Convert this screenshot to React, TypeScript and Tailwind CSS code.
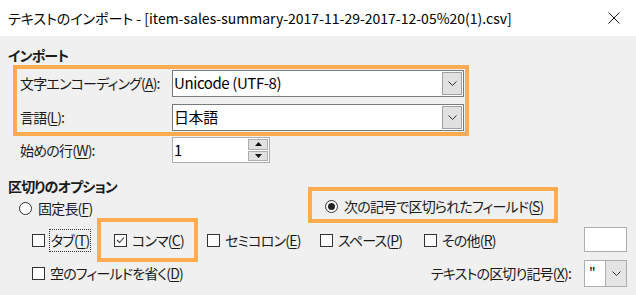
import type { ReactNode } from "react";

const FONT = "font-['Noto_Sans_CJK_JP',sans-serif] [font-feature-settings:'palt']";

function Key({ k }: { k: string }) {
  return <span className="underline underline-offset-2 decoration-1">{k}</span>;
}

function Chevron() {
  return (
    <svg width="9" height="5" viewBox="0 0 9 5" fill="none">
      <path d="M0.5 0.5 L4.5 4.5 L8.5 0.5" stroke="#333" strokeWidth="1" />
    </svg>
  );
}

function Combo({ value }: { value: string }) {
  return (
    <div className="flex h-[27px] w-[292px] shrink-0 border border-[#7a7a7a] bg-white">
      <div className="flex flex-1 items-center pl-[1px] text-[15px] tracking-[-0.4px] text-black">{value}</div>
      <div className="m-[1px] flex w-[20px] items-center justify-center border border-[#a0a0a0] bg-[#e1e1e1]">
        <Chevron />
      </div>
    </div>
  );
}

function Check({ checked, label }: { checked?: boolean; label: ReactNode }) {
  return (
    <div className="flex items-center gap-[5px]">
      <div className="flex h-[13px] w-[13px] shrink-0 items-center justify-center border border-[#333] bg-white">
        {checked && (
          <svg width="9" height="8" viewBox="0 0 9 8" fill="none">
            <path d="M1 4 L3.5 6.5 L8 1.5" stroke="#333" strokeWidth="1.1" />
          </svg>
        )}
      </div>
      <span>{label}</span>
    </div>
  );
}

function Radio({ checked, label }: { checked?: boolean; label: ReactNode }) {
  return (
    <div className="flex items-center gap-[6px]">
      <div className="flex h-[13px] w-[13px] shrink-0 items-center justify-center rounded-full border border-[#333] bg-white">
        {checked && <div className="h-[7px] w-[7px] rounded-full bg-[#222]" />}
      </div>
      <span>{label}</span>
    </div>
  );
}

export default function App() {
  return (
    <div className={`w-[636px] h-[295px] overflow-hidden whitespace-nowrap bg-[#f0f0f0] text-[14px] text-[#1a1a1a] ${FONT}`}>
      {/* title bar */}
      <div className="flex h-[36px] items-center justify-between bg-white pl-2 pr-[16px]">
        <span className="text-[14px] text-black">
          テキストのインポート - [item-sales-summary-2017-11-29-2017-12-05%20(1).csv]
        </span>
        <svg width="12" height="12" viewBox="0 0 12 12">
          <path d="M0.5 0.5 L11.5 11.5 M11.5 0.5 L0.5 11.5" stroke="#111" strokeWidth="1" />
        </svg>
      </div>

      <div className="tracking-[-0.8px]">
        {/* import section */}
        <div className="pl-2 pt-[10px] font-bold leading-[18px]">インポート</div>
        <div className="ml-[13px] mt-[1px] flex h-[71px] w-[456px] flex-col gap-[7px] border-4 border-[#ffab50] pt-[1px]">
          <div className="flex items-center">
            <span className="w-[155px] shrink-0 pl-[3px]">
              文字エンコーディング(<Key k="A" />):
            </span>
            <Combo value="Unicode (UTF-8)" />
          </div>
          <div className="flex items-center">
            <span className="w-[155px] shrink-0 pl-[3px]">
              言語(<Key k="L" />):
            </span>
            <Combo value="日本語" />
          </div>
        </div>
        <div className="mt-[1px] flex items-center pl-[20px]">
          <span className="w-[152px] shrink-0">
            始めの行(<Key k="W" />):
          </span>
          <div className="flex h-[26px] w-[98px] shrink-0 border border-[#adadad] bg-white">
            <div className="flex flex-1 items-center pl-[1px] text-[15px] text-black">1</div>
            <div className="m-[1px] flex w-[20px] flex-col gap-[1px]">
              <div className="flex flex-1 items-center justify-center border border-[#adadad] bg-[#e1e1e1]">
                <svg width="7" height="4" viewBox="0 0 7 4"><path d="M0 4 L3.5 0 L7 4Z" fill="#111" /></svg>
              </div>
              <div className="flex flex-1 items-center justify-center border border-[#adadad] bg-[#e1e1e1]">
                <svg width="7" height="4" viewBox="0 0 7 4"><path d="M0 0 L3.5 4 L7 0Z" fill="#111" /></svg>
              </div>
            </div>
          </div>
        </div>

        {/* separator options */}
        <div className="flex">
          <div className="flex w-[300px] shrink-0 flex-col">
            <div className="pl-2 pt-[14px] font-bold leading-[18px]">区切りのオプション</div>
            <div className="h-[22px] pl-[19px] pt-[3px]">
              <Radio label={<>固定長(<Key k="F" />)</>} />
            </div>
          </div>
          <div className="mb-[-5px] ml-[8px] mt-[24px] flex h-[36px] w-[250px] shrink-0 items-center border-4 border-[#ffab50] pl-[13px] pt-[3px]">
            <Radio checked label={<>次の記号で区切られたフィールド(<Key k="S" />)</>} />
          </div>
        </div>

        <div className="flex h-[42px] items-start">
          <div className="flex h-[44px] w-[97px] shrink-0 items-center pl-[32px]">
            <div className="flex items-center gap-[4px]">
              <div className="h-[13px] w-[13px] border border-[#333] bg-white" />
              <span className="border border-dotted border-[#333] px-[1px] leading-[21px]">
                タブ(<Key k="T" />)
              </span>
            </div>
          </div>
          <div className="flex h-[44px] w-[101px] shrink-0 items-center border-4 border-[#ffab50] pl-[13px]">
            <Check checked label={<>コンマ(<Key k="C" />)</>} />
          </div>
          <div className="flex h-[44px] w-[122px] shrink-0 items-center pl-[9px]">
            <Check label={<>セミコロン(<Key k="E" />)</>} />
          </div>
          <div className="flex h-[44px] w-[104px] shrink-0 items-center">
            <Check label={<>スペース(<Key k="P" />)</>} />
          </div>
          <div className="flex h-[44px] flex-1 items-center">
            <Check label={<>その他(<Key k="R" />)</>} />
          </div>
          <div className="mr-[9px] mt-[9px] h-[25px] w-[43px] shrink-0 border border-[#adadad] bg-white" />
        </div>

        <div className="flex h-[27px] items-center">
          <div className="flex-1 pl-[32px]">
            <Check label={<>空のフィールドを省く(<Key k="D" />)</>} />
          </div>
          <span className="mr-[13px]">
            テキストの区切り記号(<Key k="X" />):
          </span>
          <div className="mr-[9px] flex h-[27px] w-[43px] shrink-0 border border-[#adadad] bg-white">
            <div className="flex-1 pl-[4px] text-black leading-[22px]">"</div>
            <div className="flex w-[21px] items-center justify-center border-l border-[#adadad] bg-[#e5e5e5]">
              <Chevron />
            </div>
          </div>
        </div>
      </div>
    </div>
  );
}
